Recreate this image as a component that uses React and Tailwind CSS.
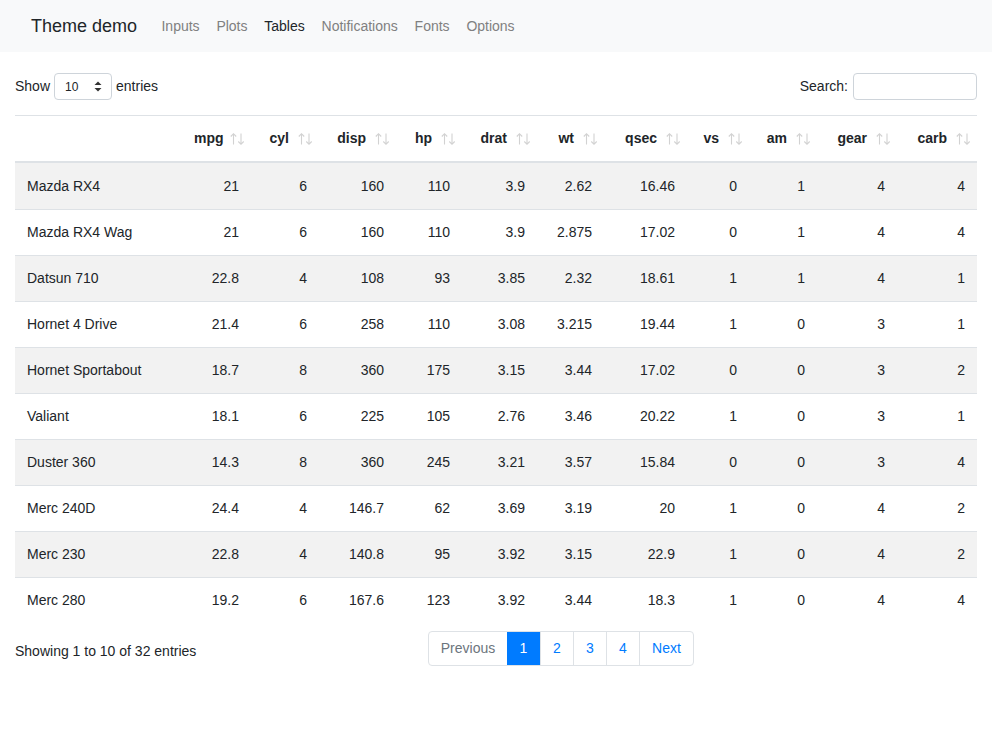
const cols = [
  { key: 'name', label: '', w: 'w-[167px]' },
  { key: 'mpg', label: 'mpg', w: 'w-[69px]' },
  { key: 'cyl', label: 'cyl', w: 'w-[68px]' },
  { key: 'disp', label: 'disp', w: 'w-[77px]' },
  { key: 'hp', label: 'hp', w: 'w-[66px]' },
  { key: 'drat', label: 'drat', w: 'w-[75px]' },
  { key: 'wt', label: 'wt', w: 'w-[67px]' },
  { key: 'qsec', label: 'qsec', w: 'w-[83px]' },
  { key: 'vs', label: 'vs', w: 'w-[62px]' },
  { key: 'am', label: 'am', w: 'w-[68px]' },
  { key: 'gear', label: 'gear', w: 'w-[80px]' },
  { key: 'carb', label: 'carb', w: 'w-[80px]' },
];

const rows = [
  ['Mazda RX4', '21', '6', '160', '110', '3.9', '2.62', '16.46', '0', '1', '4', '4'],
  ['Mazda RX4 Wag', '21', '6', '160', '110', '3.9', '2.875', '17.02', '0', '1', '4', '4'],
  ['Datsun 710', '22.8', '4', '108', '93', '3.85', '2.32', '18.61', '1', '1', '4', '1'],
  ['Hornet 4 Drive', '21.4', '6', '258', '110', '3.08', '3.215', '19.44', '1', '0', '3', '1'],
  ['Hornet Sportabout', '18.7', '8', '360', '175', '3.15', '3.44', '17.02', '0', '0', '3', '2'],
  ['Valiant', '18.1', '6', '225', '105', '2.76', '3.46', '20.22', '1', '0', '3', '1'],
  ['Duster 360', '14.3', '8', '360', '245', '3.21', '3.57', '15.84', '0', '0', '3', '4'],
  ['Merc 240D', '24.4', '4', '146.7', '62', '3.69', '3.19', '20', '1', '0', '4', '2'],
  ['Merc 230', '22.8', '4', '140.8', '95', '3.92', '3.15', '22.9', '1', '0', '4', '2'],
  ['Merc 280', '19.2', '6', '167.6', '123', '3.92', '3.44', '18.3', '1', '0', '4', '4'],
];

const navLinks = ['Inputs', 'Plots', 'Tables', 'Notifications', 'Fonts', 'Options'];

function SortArrows() {
  return (
    <svg
      className="absolute right-[6px] top-1/2 -translate-y-1/2"
      width="15"
      height="13"
      viewBox="0 0 15 13"
      fill="none"
      stroke="#d2d2d2"
      strokeWidth="1.1"
    >
      <path d="M3.5 12 V1.2 M0.8 4 L3.5 1.2 L6.2 4" />
      <path d="M11 1 V11.8 M8.3 9 L11 11.8 L13.7 9" />
    </svg>
  );
}

export default function App() {
  return (
    <div className="min-h-[744px] bg-white text-[#212529] text-[14px]" style={{ fontFamily: '"Liberation Sans", Arial, sans-serif' }}>
      {/* Navbar */}
      <nav className="h-[52px] bg-[#f8f9fa] flex items-center pl-[31px]">
        <span className="text-[18px] text-[#212529] mr-[16px]">Theme demo</span>
        {navLinks.map((l) => (
          <a key={l} className={`px-[8.4px] text-[14px] ${l === 'Tables' ? 'text-[#212529]' : 'text-[#808080]'}`}>
            {l}
          </a>
        ))}
      </nav>

      <div className="px-[15px]">
        {/* Controls */}
        <div className="flex items-start justify-between h-[63px] pt-[21px]">
          <label className="flex items-center gap-[4px] h-[27px]">
            <span>Show</span>
            <div className="w-[58px] h-[27px] border border-[#ced4da] rounded-[4px] flex items-center justify-between pl-[10px] pr-[9px] text-[12px]">
              <span>10</span>
              <svg width="8" height="11" viewBox="0 0 8 11">
                <path d="M4 0.5 L7.5 4 H0.5 Z" fill="#333" />
                <path d="M4 10.5 L7.5 7 H0.5 Z" fill="#333" />
              </svg>
            </div>
            <span>entries</span>
          </label>
          <label className="flex items-center gap-[5px] h-[27px]">
            <span>Search:</span>
            <div className="w-[124px] h-[27px] border border-[#ced4da] rounded-[4px]" />
          </label>
        </div>

        {/* Table */}
        <table className="table-fixed border-separate border-spacing-0 w-[962px]">
          <colgroup>
            {cols.map((c) => (
              <col key={c.key} className={c.w} />
            ))}
          </colgroup>
          <thead>
            <tr>
              {cols.map((c) => (
                <th
                  key={c.key}
                  className="relative h-[48px] pl-[12px] pr-[30px] text-right font-bold border-t border-b-2 border-[#dee2e6]"
                >
                  {c.label}
                  {c.label && <SortArrows />}
                </th>
              ))}
            </tr>
          </thead>
          <tbody>
            {rows.map((r, i) => (
              <tr key={r[0]} className={i % 2 === 0 ? 'bg-[#f2f2f2]' : ''}>
                {r.map((v, j) => (
                  <td
                    key={j}
                    className={`h-[46px] px-[12px] ${j === 0 ? 'text-left' : 'text-right'} ${i > 0 ? 'border-t border-[#dee2e6]' : ''}`}
                  >
                    {v}
                  </td>
                ))}
              </tr>
            ))}
          </tbody>
        </table>

        {/* Footer */}
        <div className="flex items-center mt-[8px]">
          <div className="w-[413px] pt-[6px]">Showing 1 to 10 of 32 entries</div>
          <div className="flex h-[35px] border border-[#dee2e6] rounded-[4px] overflow-hidden text-[14px]">
            <span className="w-[78px] flex items-center justify-center text-[#6c757d]">Previous</span>
            <span className="w-[33px] flex items-center justify-center bg-[#007bff] text-white">1</span>
            <span className="w-[33px] flex items-center justify-center text-[#007bff] border-l border-[#dee2e6]">2</span>
            <span className="w-[33px] flex items-center justify-center text-[#007bff] border-l border-[#dee2e6]">3</span>
            <span className="w-[33px] flex items-center justify-center text-[#007bff] border-l border-[#dee2e6]">4</span>
            <span className="w-[54px] flex items-center justify-center text-[#007bff] border-l border-[#dee2e6]">Next</span>
          </div>
        </div>
      </div>
    </div>
  );
}
